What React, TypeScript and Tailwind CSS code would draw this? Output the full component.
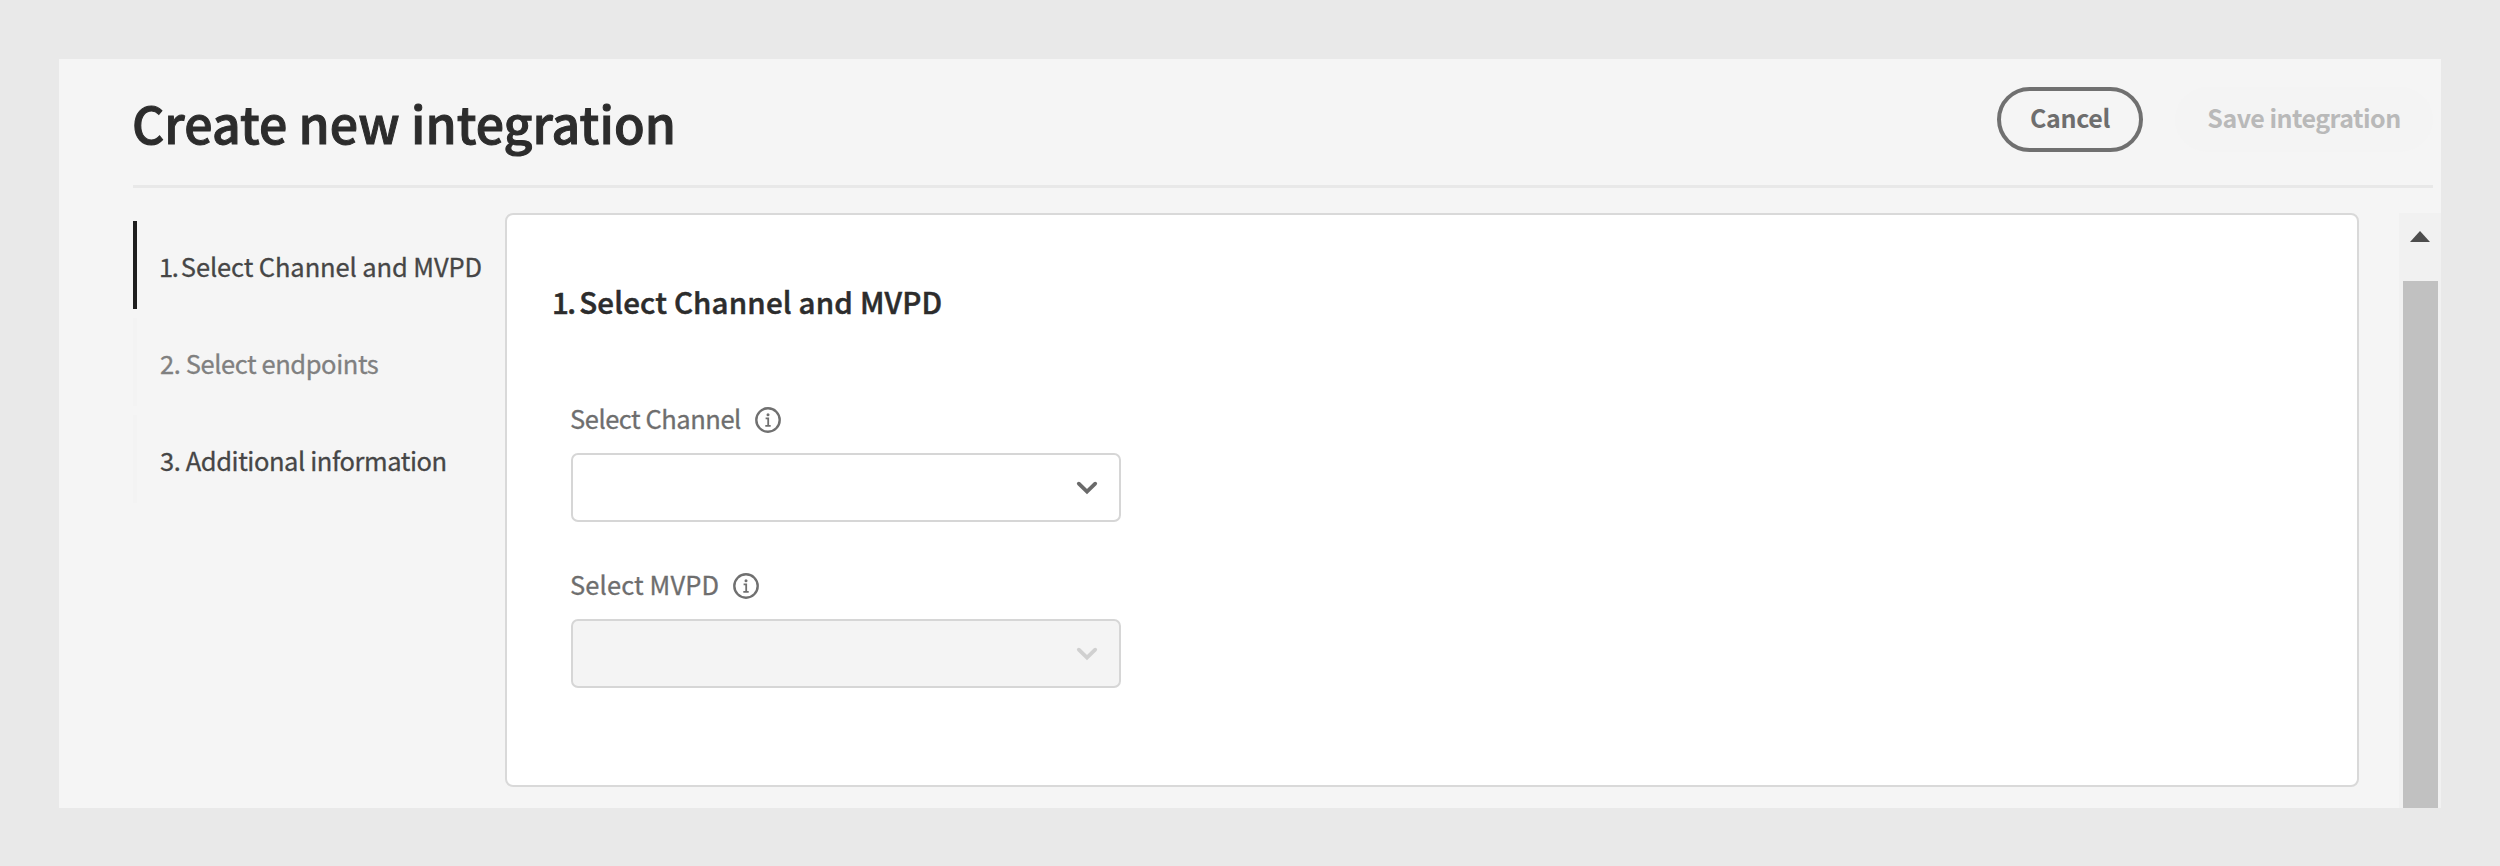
import React from "react";

function InfoIcon() {
  return (
    <svg viewBox="0 0 26 26" className="h-[26px] w-[26px]" fill="none" stroke="#707070">
      <circle cx="13" cy="13" r="11.7" strokeWidth="2.4" />
      <circle cx="13" cy="7.8" r="1.5" fill="#707070" stroke="none" />
      <path d="M10.6 11.4H13.2V18.8M10.3 18.9H15.7" strokeWidth="1.8" />
    </svg>
  );
}

function Chevron({ disabled }: { disabled?: boolean }) {
  return (
    <svg viewBox="0 0 22 14" className="h-[14px] w-[22px]" fill="none">
      <path
        d="M2.8 2.7L11 10.7L19.2 2.7"
        stroke={disabled ? "#d0d0d0" : "#6a6a6a"}
        strokeWidth="3.8"
        strokeLinecap="round"
      />
    </svg>
  );
}

function Field({ label, disabled }: { label: string; disabled?: boolean }) {
  return (
    <div className="flex flex-col">
      <div className="-ml-px flex h-8 items-center">
        <span
          className={
            disabled
              ? "text-[25.5px] leading-8 tracking-[0.12px] text-[#6e6e6e] [-webkit-text-stroke:0.3px_#6e6e6e]"
              : "text-[25.5px] leading-8 tracking-[-0.46px] text-[#6e6e6e] [-webkit-text-stroke:0.3px_#6e6e6e]"
          }
        >
          {label}
        </span>
        <span className="ml-[14px] mt-1">
          <InfoIcon />
        </span>
      </div>
      <button
        disabled={disabled}
        aria-label={label}
        className={
          disabled
            ? "mt-[19px] flex h-[69px] w-[550px] items-center justify-end rounded-[7px] border-2 border-[#d6d6d6] bg-[#f4f4f4] pr-[21px]"
            : "mt-[19px] flex h-[69px] w-[550px] items-center justify-end rounded-[7px] border-2 border-[#d6d6d6] bg-white pr-[21px]"
        }
      >
        <Chevron disabled={disabled} />
      </button>
    </div>
  );
}

export default function App() {
  return (
    <div className="h-[866px] w-[2500px] bg-[#e9e9e9] pl-[59px] pt-[59px] font-['Noto_Sans_CJK_SC','Open_Sans',sans-serif]">
      <div className="flex h-[749px] w-[2382px] flex-col bg-[#f5f5f5] pl-[74px]">
        <header className="mr-2 flex h-[129px] items-start justify-between border-b-3 border-[#e8e8e8]">
          <h1 className="-ml-px mt-[33px] text-[50px] font-medium leading-[60px] tracking-[0.06px] text-[#2c2c2c] [-webkit-text-stroke:1px_#2c2c2c]">
            Create new integration
          </h1>
          <div className="mt-[28px] flex gap-[32px]">
            <button className="h-[65px] w-[146px] rounded-full border-4 border-[#707070] pb-1 text-[25px] font-bold tracking-[-0.3px] text-[#6e6e6e]">
              Cancel
            </button>
            <button
              disabled
              className="h-[65px] w-[258px] rounded-full bg-[#f4f4f4] pb-1 text-[25px] font-bold tracking-[-0.53px] text-[#b9b9b9]"
            >
              Save integration
            </button>
          </div>
        </header>

        <div className="flex min-h-0 flex-1">
          <nav className="mt-[33px] flex h-[291px] w-[372px] flex-col gap-[9px] text-[25.5px] tracking-[-0.42px] text-[#464646]">
            <div className="flex h-[88px] items-center border-l-4 border-[#1e1e1e] pl-[22px] pt-[3px] tracking-[-0.1px] whitespace-pre [-webkit-text-stroke:0.3px_#464646]">
              <span className="tracking-[-1.9px]"><span className="tracking-[-1.4px]">1</span>. </span>
              <span>Select Channel and MVPD</span>
            </div>
            <div className="flex h-[88px] items-center border-l-4 border-[#f3f3f3] pl-[23px] pt-[3px] text-[#808080] [-webkit-text-stroke:0.3px_#808080]">
              2. Select endpoints
            </div>
            <div className="flex h-[88px] items-center border-l-4 border-[#f3f3f3] pl-[23px] pt-[3px] [-webkit-text-stroke:0.3px_#464646]">
              3. Additional information
            </div>
          </nav>

          <main className="mt-[25px] h-[574px] w-[1854px] rounded-[8px] border-2 border-[#d9d9d9] bg-white pl-[46px] pt-[66px]">
            <h2 className="flex whitespace-pre text-[29.5px] font-medium leading-10 tracking-[0.18px] text-[#2c2c2c] [-webkit-text-stroke:0.5px_#2c2c2c]">
              <span className="-ml-px tracking-[-1.7px]"><span className="tracking-[-1.6px]">1</span>. </span>
              <span>Select Channel and MVPD</span>
            </h2>
            <div className="ml-[18px] mt-[81px] flex flex-col gap-[46px]">
              <Field label="Select Channel" />
              <Field label="Select MVPD" disabled />
            </div>
          </main>

          <div className="ml-[40px] mt-[25px] flex w-[42px] flex-col items-center bg-[#f1f1f1]">
            <svg viewBox="0 0 20 11" className="mt-[18px] h-[11px] w-[20px] shrink-0">
              <path d="M0 11L10 0L20 11Z" fill="#4d4d4d" />
            </svg>
            <div className="mt-[39px] w-[35px] flex-1 bg-[#c1c1c1]" />
          </div>
        </div>
      </div>
    </div>
  );
}
